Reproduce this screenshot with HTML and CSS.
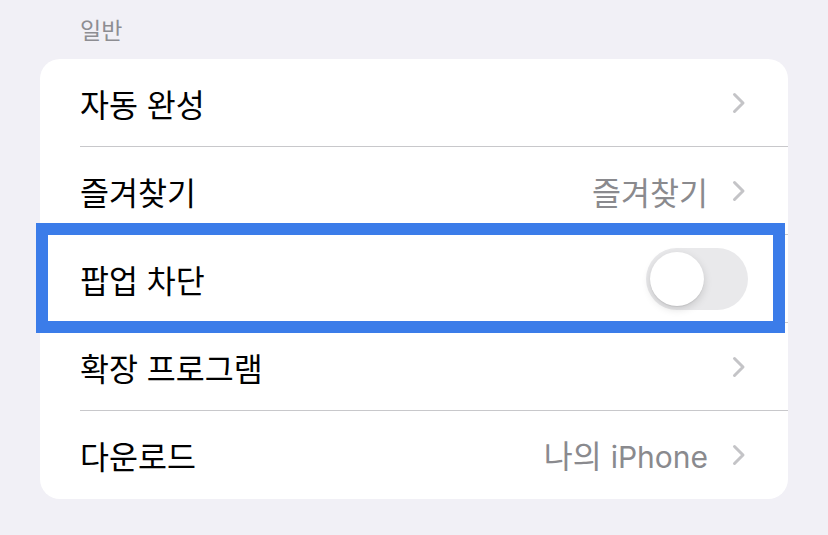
FILE: index.html
```html
<!DOCTYPE html>
<html lang="ko">
<head>
<meta charset="utf-8">
<link rel="stylesheet" href="styles.css">
</head>
<body>
<div class="page">
  <div class="section-title">일반</div>
  <div class="card">
    <div class="row">
      <div class="row-inner">
        <span class="label">자동 완성</span>
        <span class="right">
          <svg class="chev" viewBox="0 0 14 22"><path d="M2.5 2.5 L11 11 L2.5 19.5"/></svg>
        </span>
      </div>
    </div>
    <div class="row">
      <div class="row-inner">
        <span class="label">즐겨찾기</span>
        <span class="right">
          <span class="value">즐겨찾기</span>
          <svg class="chev" viewBox="0 0 14 22"><path d="M2.5 2.5 L11 11 L2.5 19.5"/></svg>
        </span>
      </div>
    </div>
    <div class="row">
      <div class="row-inner">
        <span class="label">팝업 차단</span>
        <span class="toggle"><span class="knob"></span></span>
      </div>
    </div>
    <div class="row">
      <div class="row-inner">
        <span class="label">확장 프로그램</span>
        <span class="right">
          <svg class="chev" viewBox="0 0 14 22"><path d="M2.5 2.5 L11 11 L2.5 19.5"/></svg>
        </span>
      </div>
    </div>
    <div class="row last">
      <div class="row-inner">
        <span class="label">다운로드</span>
        <span class="right">
          <span class="value">나의 <span class="latin">iPhone</span></span>
          <svg class="chev" viewBox="0 0 14 22"><path d="M2.5 2.5 L11 11 L2.5 19.5"/></svg>
        </span>
      </div>
    </div>
    <div class="highlight"></div>
  </div>
</div>
</body>
</html>
```
FILE: styles.css
```css
* { box-sizing: border-box; }
html, body {
  margin: 0;
  padding: 0;
  background: #f1f0f6;
  width: 828px;
  height: 535px;
  overflow: hidden;
}
body {
  font-family: "Noto Sans CJK KR", "Noto Sans", sans-serif;
  -webkit-font-smoothing: antialiased;
}
.page {
  padding: 14px 40px 0 40px;
}
.section-title {
  font-size: 23px;
  line-height: 30px;
  color: #8d8d92;
  padding-left: 40px;
  height: 45px;
}
.card {
  position: relative;
  background: #ffffff;
  border-radius: 20px;
  width: 748px;
}
.row {
  padding-left: 40px;
  height: 88px;
}
.row-inner {
  height: 88px;
  display: flex;
  align-items: center;
  justify-content: space-between;
  border-bottom: 1px solid #c8c8cb;
  padding-right: 40px;
}
.row.last .row-inner { border-bottom: none; }
.label {
  font-size: 31.5px;
  line-height: 40px;
  color: #000;
}
.right {
  display: flex;
  align-items: center;
  gap: 24px;
}
.value {
  font-size: 31.5px;
  line-height: 40px;
  color: #8a8a8e;
}
.latin {
  font-family: "Inter", "Noto Sans", sans-serif;
  font-size: 30px;
}
.chev {
  width: 14px;
  height: 22px;
  fill: none;
  stroke: #c4c4c7;
  stroke-width: 3;
  stroke-linecap: round;
  stroke-linejoin: round;
  margin-right: 2px;
}
.toggle {
  width: 102px;
  height: 62px;
  border-radius: 31px;
  background: #e9e9eb;
  position: relative;
  display: block;
}
.knob {
  position: absolute;
  left: 4px;
  top: 4px;
  width: 54px;
  height: 54px;
  border-radius: 50%;
  background: #fff;
  box-shadow: 0 3px 8px rgba(0,0,0,0.15), 0 1px 1px rgba(0,0,0,0.08);
}
.highlight {
  position: absolute;
  left: -4px;
  top: 164px;
  width: 749px;
  height: 110px;
  border: 12px solid #3b7ce9;
  pointer-events: none;
}
```
